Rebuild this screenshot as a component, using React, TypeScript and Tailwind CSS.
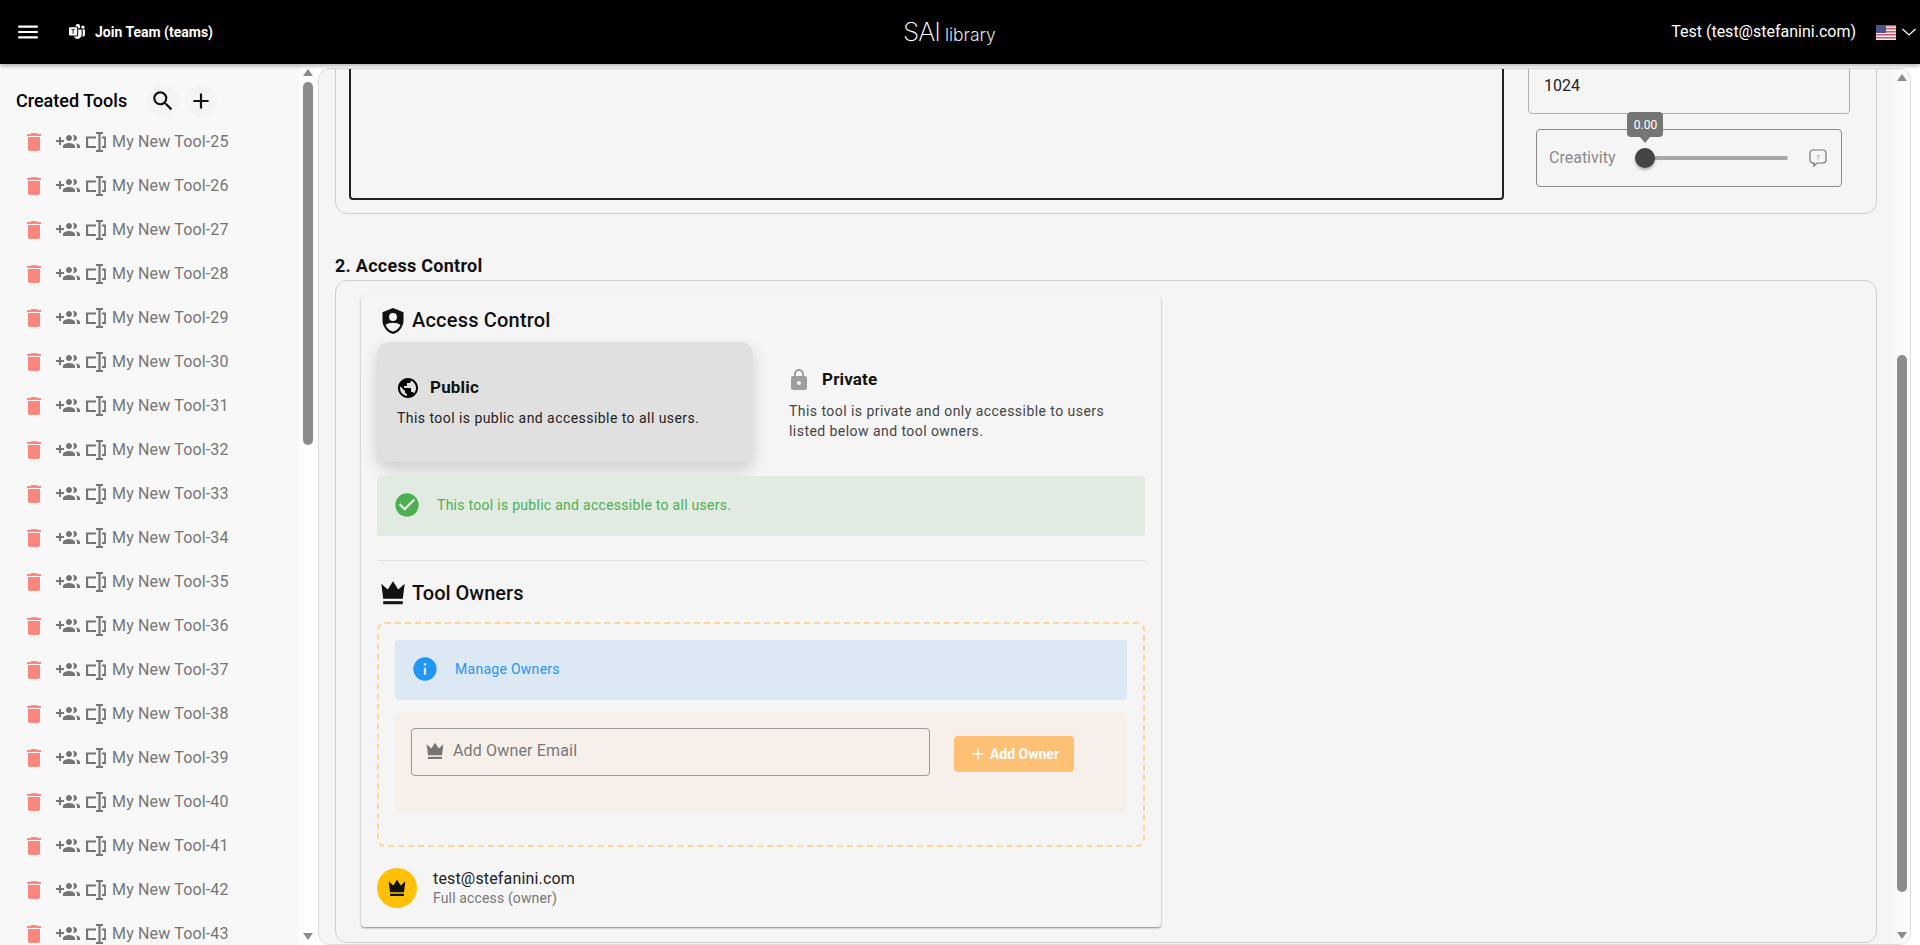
import { MdCheckCircle, MdDelete, MdInfo, MdLock, MdMenu, MdPublic, MdSearch, MdAdd } from "react-icons/md";
import { BsMicrosoftTeams } from "react-icons/bs";

const TOOLS = Array.from({ length: 19 }, (_, i) => `My New Tool-${i + 25}`);

function GroupAddIcon() {
  return (
    <svg width="24" height="24" viewBox="0 0 24 24" fill="#757575" className="shrink-0 ml-[10px]">
      <path d="M8 10H5V7H3v3H0v2h3v3h2v-3h3v-2zm10 1c1.660 0 2.990-1.340 2.990-3S19.660 5 18 5c-.32 0-.63.05-.91.14.57.81.9 1.790.9 2.860s-.34 2.040-.9 2.860c.28.09.59.14.91.14zm-5 0c1.660 0 2.990-1.340 2.990-3S14.660 5 13 5s-3 1.340-3 3 1.340 3 3 3zm6.620 2.160c.83.73 1.380 1.660 1.380 2.840v2h3v-2c0-1.540-2.370-2.490-4.380-2.840zM13 13c-2 0-6 1-6 3v2h12v-2c0-2-4-3-6-3z" />
    </svg>
  );
}

function RenameIcon() {
  return (
    <svg width="20" height="20" viewBox="0 0 20 20" fill="none" stroke="#757575" strokeWidth="2.200" className="shrink-0">
      <path d="M10 5.500H1V15h9" />
      <path d="M16 5.500h3V15h-3" strokeWidth="1.800" />
      <path d="M13.500 1v18M10 1h7M10 19h7" />
    </svg>
  );
}

function CrownIcon({ size, color }: { size: number; color: string }) {
  return (
    <svg width={size} height={size} viewBox="0 0 24 24" fill={color} className="shrink-0">
      <path d="M2 4l5.500 5L12 2l4.500 7L22 4l-1.600 13H3.600z" />
      <path d="M3.600 19h16.800v2.600H3.600z" />
    </svg>
  );
}

function ShieldPersonIcon() {
  return (
    <svg width="28" height="28" viewBox="0 0 24 24" className="shrink-0">
      <path fill="#111" d="M12 .8L3 4.400v7c0 5.600 3.800 10.600 9 11.800 5.200-1.200 9-6.200 9-11.800v-7z" />
      <circle cx="12" cy="8.600" r="3.400" fill="#f5f5f5" />
      <path fill="#f5f5f5" d="M5.600 15.400c3-2.600 9.800-2.600 12.800 0-1.200 2.800-3.600 4.800-6.400 5.700-2.800-.9-5.200-2.900-6.400-5.700z" />
    </svg>
  );
}

function UsFlag() {
  return (
    <svg width="20" height="15" viewBox="0 0 20 15" className="shrink-0">
      <rect width="20" height="15" fill="#f4f0f0" />
      <path d="M0 0h20v1.500H0zM0 3h20v1.500H0zM0 6h20v1.500H0zM0 9h20v1.500H0zM0 12h20v1.500H0z" fill="#c9566a" />
      <rect width="10" height="8" fill="#46558c" />
    </svg>
  );
}

function Scrollbar({ thumb, track }: { thumb: string; track: string }) {
  return (
    <div className={`w-[17px] shrink-0 flex flex-col items-center ${track}`}>
      <div className="h-[17px] shrink-0 flex items-center justify-center">
        <div className="w-0 h-0 border-x-[5px] border-x-transparent border-b-[7px] border-b-[#8c8c8c]" />
      </div>
      <div className="flex-1 min-h-0 w-[10px]">
        <div className={`w-[10px] rounded-[5px] bg-[#8c8c8c] ${thumb}`} />
      </div>
      <div className="h-[17px] shrink-0 flex items-center justify-center">
        <div className="w-0 h-0 border-x-[5px] border-x-transparent border-t-[7px] border-t-[#8c8c8c]" />
      </div>
    </div>
  );
}

function Header() {
  return (
    <header className="relative z-10 h-16 shrink-0 bg-black text-white flex items-center shadow-[0_2px_4px_rgba(0,0,0,0.3)]">
      <div className="w-[816px] flex items-center pl-[15px]">
        <MdMenu size={26} />
        <BsMicrosoftTeams size={16} className="ml-[28px]" />
        <span className="ml-[10px] text-[14px] font-bold">Join Team (teams)</span>
      </div>
      <div className="flex items-baseline pl-[87px] font-['Inter',sans-serif] font-extralight">
        <span className="text-[26px] leading-none tracking-[-1px]">SAI</span>
        <span className="ml-[5px] text-[17.500px] leading-none font-light text-[#e4e4e4]">library</span>
      </div>
      <span className="ml-auto text-[16px]">Test (test@stefanini.com)</span>
      <div className="ml-5 mr-1 flex items-center gap-[6px]">
        <UsFlag />
        <svg width="14" height="8" viewBox="0 0 14 8" fill="none" stroke="#fff" strokeWidth="1.200">
          <path d="M.5 1L7 7l6.500-6" />
        </svg>
      </div>
    </header>
  );
}

function Sidebar() {
  return (
    <aside className="w-[316px] shrink-0 flex">
      <div className="w-[299px] bg-[#f8f8f8] overflow-hidden">
        <div className="flex items-center h-8 mt-[21px] pl-4">
          <h2 className="text-[18px] font-medium text-black leading-none">Created Tools</h2>
          <button className="ml-5 w-8 h-8 rounded-full bg-[#f4f4f4] flex items-center justify-center text-[#111]">
            <MdSearch size={26} />
          </button>
          <button className="ml-[6px] w-8 h-8 rounded-full bg-[#f4f4f4] flex items-center justify-center text-[#111]">
            <MdAdd size={26} />
          </button>
        </div>
        <ul className="mt-[3px]">
          {TOOLS.map((tool) => (
            <li key={tool} className="h-[44px] flex items-center pl-[22px]">
              <MdDelete size={24} className="shrink-0 text-[#f88780]" />
              <GroupAddIcon />
              <span className="ml-[6px]"><RenameIcon /></span>
              <span className="ml-[6px] text-[16px] tracking-[0.01em] text-[#757575] whitespace-nowrap">{tool}</span>
            </li>
          ))}
        </ul>
      </div>
      <Scrollbar track="bg-[#fdfdfd]" thumb="mt-[1px] h-[363px]" />
    </aside>
  );
}

function TopCard() {
  return (
    <section className="-mt-[40px] border border-[#cfcfcf] rounded-xl flex pl-[13px] pb-[13px]">
      <div className="w-[1155px] h-[170px] border-2 border-[#222] rounded-[4px]" />
      <div className="ml-6 w-[322px]">
        <div className="h-[84px] border border-[#b0b0b0] rounded-[4px] flex items-end pl-[15px] pb-[15px] text-[16px] text-[#222]">
          1024
        </div>
        <div className="relative mt-[15px] ml-2 w-[306px] h-[58px] border border-[#8a8a8a] rounded-[4px] flex items-center pl-3">
          <span className="text-[16px] text-[#8a8a8a]">Creativity</span>
          <div className="relative ml-[30px] w-[143px] h-[4px] bg-[#a8a8a8] rounded-full">
            <div className="absolute -left-[10px] -top-[8px] w-5 h-5 rounded-full bg-[#444] shadow-[0_2px_3px_rgba(0,0,0,0.3)]" />
            <div className="absolute -left-[18px] -top-[44px] w-9 h-[25px] rounded-[4px] bg-[#757575] text-white text-[12px] flex items-center justify-center">
              0.00
              <div className="absolute -bottom-[6px] left-[13px] w-0 h-0 border-x-[5px] border-x-transparent border-t-[6px] border-t-[#757575]" />
            </div>
          </div>
          <svg width="20" height="20" viewBox="0 0 20 20" fill="none" stroke="#777" strokeWidth="1.200" className="ml-[20px]">
            <path d="M5 2h10a3 3 0 0 1 3 3v7a3 3 0 0 1-3 3H9l-3 3v-3.100A3 3 0 0 1 2 12V5a3 3 0 0 1 3-3z" />
            <text x="10" y="11.500" fontSize="8" textAnchor="middle" fill="#999" stroke="none">?</text>
          </svg>
        </div>
      </div>
    </section>
  );
}

function AccessCard() {
  return (
    <div className="w-[800px] ml-[25px] mt-[15px] mb-[15px] bg-[#f5f5f5] rounded-[4px] shadow-[0_1px_2px_rgba(0,0,0,0.45)] px-4 pt-[11px] pb-[19px] text-[#111]">
      <div className="flex items-center h-7 pl-[2px]">
        <ShieldPersonIcon />
        <h3 className="ml-[5px] pb-[2px] text-[20px] font-medium tracking-[0.01em]">Access Control</h3>
      </div>

      <div className="flex mt-[7px] gap-5">
        <div className="w-[376px] h-[120px] rounded-xl bg-[#e0e0e0] shadow-[0_8px_16px_rgba(0,0,0,0.16)] flex flex-col justify-center px-5">
          <div className="flex items-center h-6 mb-2 -ml-[1px]">
            <MdPublic size={24} className="text-black" />
            <span className="ml-[10px] text-[17px] font-bold tracking-[0.01em]">Public</span>
          </div>
          <p className="text-[14px] leading-5 tracking-[0.032em] text-[#222]">This tool is public and accessible to all users.</p>
        </div>
        <div className="w-[371px] h-[120px] flex flex-col justify-center px-4 pt-[5px]">
          <div className="flex items-center h-6 mb-[9px] -ml-[2px]">
            <MdLock size={24} className="text-[#9e9e9e]" />
            <span className="ml-[11px] text-[17px] font-bold tracking-[0.01em]">Private</span>
          </div>
          <p className="text-[14px] leading-5 tracking-[0.032em] text-[#444]">
            This tool is private and only accessible to users listed below and tool owners.
          </p>
        </div>
      </div>

      <div className="relative mt-[14px] h-[60px] rounded-[4px] bg-[#e1ebe2] flex items-center pl-4 pb-[2px]">
        <MdCheckCircle size={28} className="text-[#4caf50]" />
        <span className="ml-4 text-[14px] tracking-[0.02em] text-[#4caf50]">This tool is public and accessible to all users.</span>
      </div>

      <div className="mt-6 border-t border-[#e0e0e0]" />

      <div className="flex items-center h-7 mt-[18px] pl-[2px]">
        <CrownIcon size={28} color="#111" />
        <h3 className="ml-[5px] text-[20px] font-medium">Tool Owners</h3>
      </div>

      <div className="mt-[15px] border-2 border-dashed border-[#fbd69d] rounded-lg px-4 pt-4 pb-[31px]">
        <div className="h-[60px] rounded-[4px] bg-[#dce8f3] flex items-center pl-4 pb-[2px]">
          <MdInfo size={28} className="text-[#2196f3]" />
          <span className="ml-4 text-[14px] tracking-[0.02em] text-[#2196f3]">Manage Owners</span>
        </div>
        <div className="mt-3 h-[102px] rounded-lg bg-[#f7f0ea] pl-4 pt-4 flex items-start">
          <div className="w-[519px] h-12 border border-[#999] rounded-[4px] flex items-center pl-[13px] pb-[2px]">
            <CrownIcon size={20} color="#757575" />
            <span className="ml-[8px] text-[16px] tracking-[0.01em] text-[#777]">Add Owner Email</span>
          </div>
          <button className="ml-6 mt-2 w-[120px] h-9 rounded-[4px] bg-[#fdc074] text-white text-[14px] font-bold flex items-center justify-center gap-[3px]">
            <MdAdd size={18} />
            Add Owner
          </button>
        </div>
      </div>

      <div className="flex items-center mt-[21px] h-10">
        <div className="w-10 h-10 rounded-full bg-[#ffc107] flex items-center justify-center">
          <CrownIcon size={20} color="#111" />
        </div>
        <div className="ml-4">
          <div className="text-[16px] leading-5 tracking-[0.01em] text-[#222]">test@stefanini.com</div>
          <div className="text-[14px] leading-[18px] tracking-[0.01em] text-[#777]">Full access (owner)</div>
        </div>
      </div>
    </div>
  );
}

export default function App() {
  return (
    <div className="h-[945px] flex flex-col overflow-hidden bg-white font-['Roboto',sans-serif]">
      <Header />
      <div className="flex flex-1 min-h-0">
        <Sidebar />
        <main className="ml-[2px] mt-[4px] w-[1593px] flex overflow-hidden rounded-xl border border-[#dcdcdc] bg-[#f5f5f5]">
          <div className="w-[1575px] pl-4 overflow-hidden">
            <div className="w-[1542px]">
              <TopCard />
              <h2 className="mt-[41px] h-[22px] text-[18px] font-bold tracking-[0.015em] leading-[22px] text-[#111]">2. Access Control</h2>
              <section className="mt-[3px] border border-[#cfcfcf] rounded-xl">
                <AccessCard />
              </section>
            </div>
          </div>
          <Scrollbar track="bg-[#fafafa]" thumb="mt-[269px] h-[537px]" />
        </main>
      </div>
    </div>
  );
}
